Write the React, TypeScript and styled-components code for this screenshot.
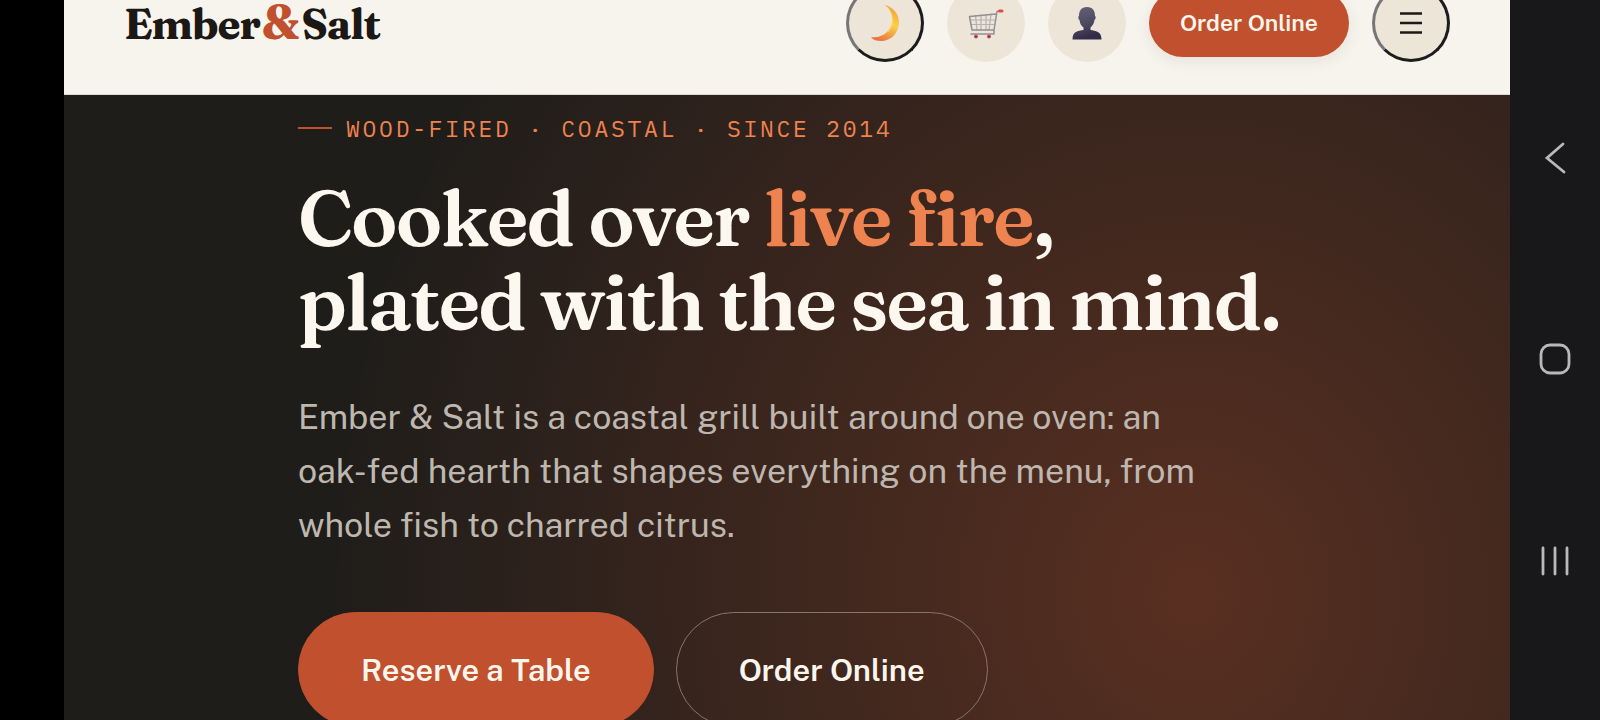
import React from 'react';
import styled, { createGlobalStyle } from 'styled-components';

const sans = "'Public Sans', 'Liberation Sans', sans-serif";
const serif = "Fraunces, 'Liberation Serif', serif";
const mono = "'IBM Plex Mono', 'Liberation Mono', monospace";

const GlobalStyle = createGlobalStyle`
  * { box-sizing: border-box; }
  body { margin: 0; background: #000; font-family: ${sans}; }
`;

const Screen = styled.div`
  display: flex;
  height: 100vh;
  padding-left: 64px;
  overflow: hidden;
  background: #000;
`;

const Page = styled.div`
  flex: 1;
  min-width: 0;
  display: flex;
  flex-direction: column;
  overflow: hidden;
  background: #f7f4ed;
`;

const Header = styled.header`
  flex: none;
  height: 144px;
  margin-top: -49px;
  padding: 0 60px;
  display: flex;
  align-items: center;
  justify-content: space-between;
  border-bottom: 1px solid #dcd8d0;
`;

const Logo = styled.a`
  font: 700 42px/52px ${serif};
  letter-spacing: -1px;
  color: #1c1815;
  text-decoration: none;
`;

const Accent = styled.span`
  padding: 0 3px 0 2px;
  color: #c0502e;
  font-size: 48px;
`;

const Actions = styled.nav`
  display: flex;
  align-items: center;
  gap: 23px;
`;

const RoundButton = styled.button<{ $bordered?: boolean }>`
  width: 78px;
  height: 78px;
  padding: 0;
  display: grid;
  place-items: center;
  border-radius: 50%;
  border: ${p => (p.$bordered ? '3px solid' : '0 solid')};
  border-color: #767676 #1c1c1c #1c1c1c #767676;
  background: #ede5d8;
  color: #1c1815;
`;

const OrderButton = styled.a`
  height: 68px;
  padding: 0 31px;
  display: flex;
  align-items: center;
  border-radius: 34px;
  background: #c0502e;
  box-shadow: 0 4px 16px rgba(28, 24, 21, 0.08);
  color: #fdf6ec;
  font: 600 23px/32px ${sans};
  text-decoration: none;
`;

const Hero = styled.main`
  flex: 1;
  min-height: 0;
  padding: 19px 0 0 234px;
  background:
    radial-gradient(860px 940px at 78% 80%, rgba(192, 80, 46, 0.36) 0, rgba(192, 80, 46, 0) 100%),
    #1f1d1a;
`;

const Eyebrow = styled.p`
  margin: 0;
  display: flex;
  align-items: center;
  gap: 14px;
  color: #ef8350;
  font: 400 23px/28px ${mono};
  letter-spacing: 0.12em;
  text-transform: uppercase;

  &::before {
    content: '';
    width: 34px;
    height: 2px;
    background: #c0502e;
  }
`;

const Title = styled.h1`
  margin: 34px 0 0;
  color: #fdf8ef;
  font: 600 78px/84px ${serif};
  letter-spacing: -2px;

  em {
    color: #ef8350;
    font-style: normal;
  }
`;

const Lead = styled.p`
  max-width: 920px;
  margin: 46px 0 0;
  color: #beb7af;
  font: 400 34px/54px ${sans};
`;

const Buttons = styled.div`
  margin-top: 60px;
  display: flex;
  gap: 22px;
`;

const Cta = styled.a<{ $outline?: boolean }>`
  height: 115px;
  padding: 0 62px;
  display: flex;
  align-items: center;
  border-radius: 58px;
  border: 1px solid ${p => (p.$outline ? '#85756d' : '#c0502e')};
  background: ${p => (p.$outline ? 'transparent' : '#c0502e')};
  color: #fdf6ec;
  font: 600 31px/40px ${sans};
  text-decoration: none;
`;

const SystemBar = styled.aside`
  flex: none;
  width: 90px;
  padding: 57px 0 58px;
  display: flex;
  flex-direction: column;
  align-items: center;
  justify-content: space-around;
  background: #18181a;
`;

const SystemButton = styled.button`
  padding: 0;
  border: 0;
  background: none;
  width: 40px;
  height: 40px;
`;

const SystemIcon = ({ children }: { children: React.ReactNode }) => (
  <svg width="40" height="40" viewBox="0 0 40 40" fill="none" stroke="#b9b9ba" strokeWidth="2.8" strokeLinecap="round">
    {children}
  </svg>
);

const Moon = () => (
  <svg width="32" height="38" viewBox="0 0 32 38">
    <defs>
      <linearGradient id="moon" x1="0.7" y1="0" x2="0.3" y2="1">
        <stop offset="0" stopColor="#f0a03c" />
        <stop offset="0.45" stopColor="#fbd04a" />
        <stop offset="1" stopColor="#ea703c" />
      </linearGradient>
    </defs>
    <path d="M16 1c8 2 14 9 14 17 0 11-8 19-18 19-4 0-8-1-10-4 6 1 12-1 16-5 7-8 7-19-2-27z" fill="url(#moon)" />
    <path d="M18 3c6 7 7 17 1 25" fill="none" stroke="#fff0a6" strokeWidth="1.2" opacity="0.6" />
  </svg>
);

const Cart = () => (
  <svg width="36" height="32" viewBox="0 0 36 32" fill="none" strokeLinecap="round" strokeLinejoin="round">
    <path d="M2 13h25M3 17.500h23M7.500 8.500L9 23M13 8v15M18 7.500V23M23 7l-2 16" stroke="#b4b1b3" strokeWidth="1.200" />
    <path d="M29 4.500L26 23H4L1.500 9.500 28 7M29 4.500l2-.5M26 23v3M3 27h23" stroke="#918f95" strokeWidth="1.500" />
    <path d="M31.500 4H34" stroke="#e0484e" strokeWidth="3" />
    <g fill="#8d2846" stroke="#c8566e"><circle cx="8" cy="29.500" r="1.600" /><circle cx="21" cy="29.500" r="1.600" /></g>
  </svg>
);

const Person = () => (
  <svg width="32" height="34" viewBox="0 0 32 34">
    <defs>
      <linearGradient id="person" x1="0" y1="0" x2="0.3" y2="1">
        <stop offset="0" stopColor="#66647a" />
        <stop offset="0.6" stopColor="#4d4a60" />
        <stop offset="1" stopColor="#332b48" />
      </linearGradient>
    </defs>
    <path d="M16 1c6 0 8 4 8 9 1 0 1 3-.5 4-.5 4-2.500 6-4 7.500V24c5 1 11 1 11 9.500h-29C1.500 25 7 25 12.500 24v-2.500C10.500 20 9 18 8.500 14 7 13 7 10 8 10c0-5 2-9 8-9z" fill="url(#person)" />
  </svg>
);

const Menu = () => (
  <svg width="24" height="24" viewBox="0 0 24 24" stroke="currentColor" strokeWidth="2.600">
    <path d="M1 2.500h22M1 12h22M1 21.500h22" />
  </svg>
);

export default function App() {
  return (
    <>
      <GlobalStyle />
      <Screen>
        <Page>
          <Header>
            <Logo href="#">Ember<Accent>&amp;</Accent>Salt</Logo>
            <Actions>
              <RoundButton $bordered aria-label="Switch to dark mode"><Moon /></RoundButton>
              <RoundButton aria-label="Cart"><Cart /></RoundButton>
              <RoundButton aria-label="Account"><Person /></RoundButton>
              <OrderButton href="#order">Order Online</OrderButton>
              <RoundButton $bordered aria-label="Open menu"><Menu /></RoundButton>
            </Actions>
          </Header>
          <Hero>
            <Eyebrow>Wood-fired · Coastal · Since 2014</Eyebrow>
            <Title>Cooked over <em>live fire</em>,<br />plated with the sea in mind.</Title>
            <Lead>Ember &amp; Salt is a coastal grill built around one oven: an oak-fed hearth that shapes everything on the menu, from whole fish to charred citrus.</Lead>
            <Buttons>
              <Cta href="#reserve">Reserve a Table</Cta>
              <Cta href="#order" $outline>Order Online</Cta>
            </Buttons>
          </Hero>
        </Page>
        <SystemBar>
          <SystemButton aria-label="Back"><SystemIcon><path d="M28 6L12 20l17 14" /></SystemIcon></SystemButton>
          <SystemButton aria-label="Home"><SystemIcon><rect x="6" y="6" width="28" height="28" rx="9" /></SystemIcon></SystemButton>
          <SystemButton aria-label="Recent apps"><SystemIcon><path d="M8 7v26M20 7v26M32 7v26" /></SystemIcon></SystemButton>
        </SystemBar>
      </Screen>
    </>
  );
}
